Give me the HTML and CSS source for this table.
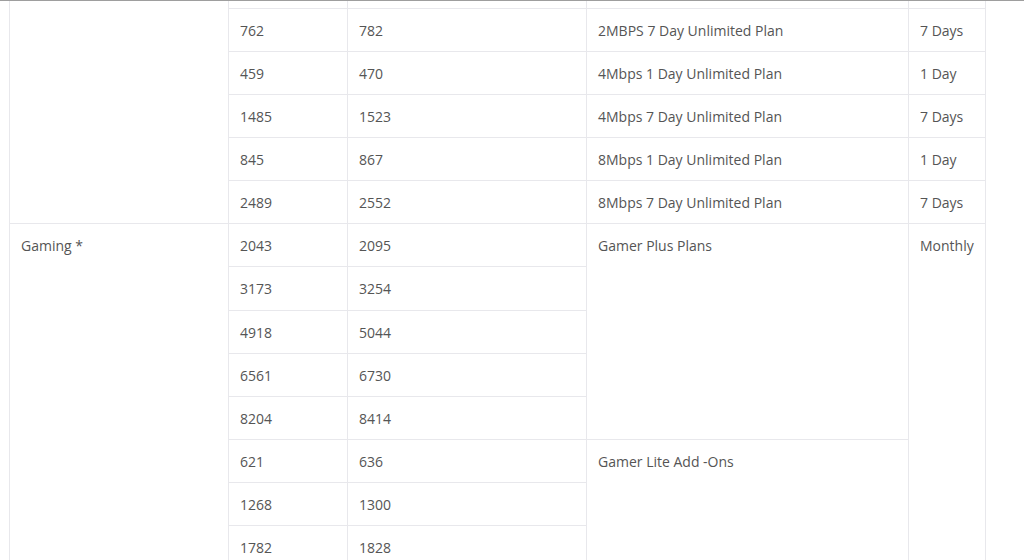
FILE: index.html
```html
<!DOCTYPE html>
<html lang="en">
<head>
<meta charset="utf-8">
<title>Plans</title>
<link rel="stylesheet" href="styles.css">
</head>
<body>
<div class="topbar"></div>
<div class="wrap">
<table class="plans">
  <colgroup>
    <col class="c-cat"><col class="c-p1"><col class="c-p2"><col class="c-plan"><col class="c-val">
  </colgroup>
  <tbody>
    <tr class="partial">
      <td rowspan="6"></td><td></td><td></td><td></td><td></td>
    </tr>
    <tr><td>762</td><td>782</td><td>2MBPS 7 Day Unlimited Plan</td><td>7 Days</td></tr>
    <tr><td>459</td><td>470</td><td>4Mbps 1 Day Unlimited Plan</td><td>1 Day</td></tr>
    <tr><td>1485</td><td>1523</td><td>4Mbps 7 Day Unlimited Plan</td><td>7 Days</td></tr>
    <tr><td>845</td><td>867</td><td>8Mbps 1 Day Unlimited Plan</td><td>1 Day</td></tr>
    <tr><td>2489</td><td>2552</td><td>8Mbps 7 Day Unlimited Plan</td><td>7 Days</td></tr>
    <tr><td rowspan="8">Gaming *</td><td>2043</td><td>2095</td><td rowspan="5">Gamer Plus Plans</td><td rowspan="8">Monthly</td></tr>
    <tr><td>3173</td><td>3254</td></tr>
    <tr><td>4918</td><td>5044</td></tr>
    <tr><td>6561</td><td>6730</td></tr>
    <tr><td>8204</td><td>8414</td></tr>
    <tr><td>621</td><td>636</td><td rowspan="3">Gamer Lite Add -Ons</td></tr>
    <tr><td>1268</td><td>1300</td></tr>
    <tr><td>1782</td><td>1828</td></tr>
  </tbody>
</table>
</div>
</body>
</html>
```
FILE: styles.css
```css
html, body {
  margin: 0;
  padding: 0;
  background: #ffffff;
}
body {
  font-family: "Open Sans", "DejaVu Sans", sans-serif;
  font-size: 14px;
  color: #555555;
}
.topbar {
  height: 1px;
  background: #9e9e9e;
}
.wrap {
  padding-left: 9px;
}
.plans {
  border-collapse: collapse;
  table-layout: fixed;
  width: 976px;
}
.c-cat { width: 219px; }
.c-p1 { width: 119px; }
.c-p2 { width: 239px; }
.c-plan { width: 322px; }
.c-val { width: 77px; }
.plans td {
  border: 1px solid #e8e8ec;
  padding: 12px 11px 10.08px;
  line-height: 20px;
  vertical-align: top;
  text-align: left;
  white-space: nowrap;
}
.plans tr.partial td {
  height: 7px;
  padding: 0;
  line-height: 0;
  border-top: 0;
}
```
